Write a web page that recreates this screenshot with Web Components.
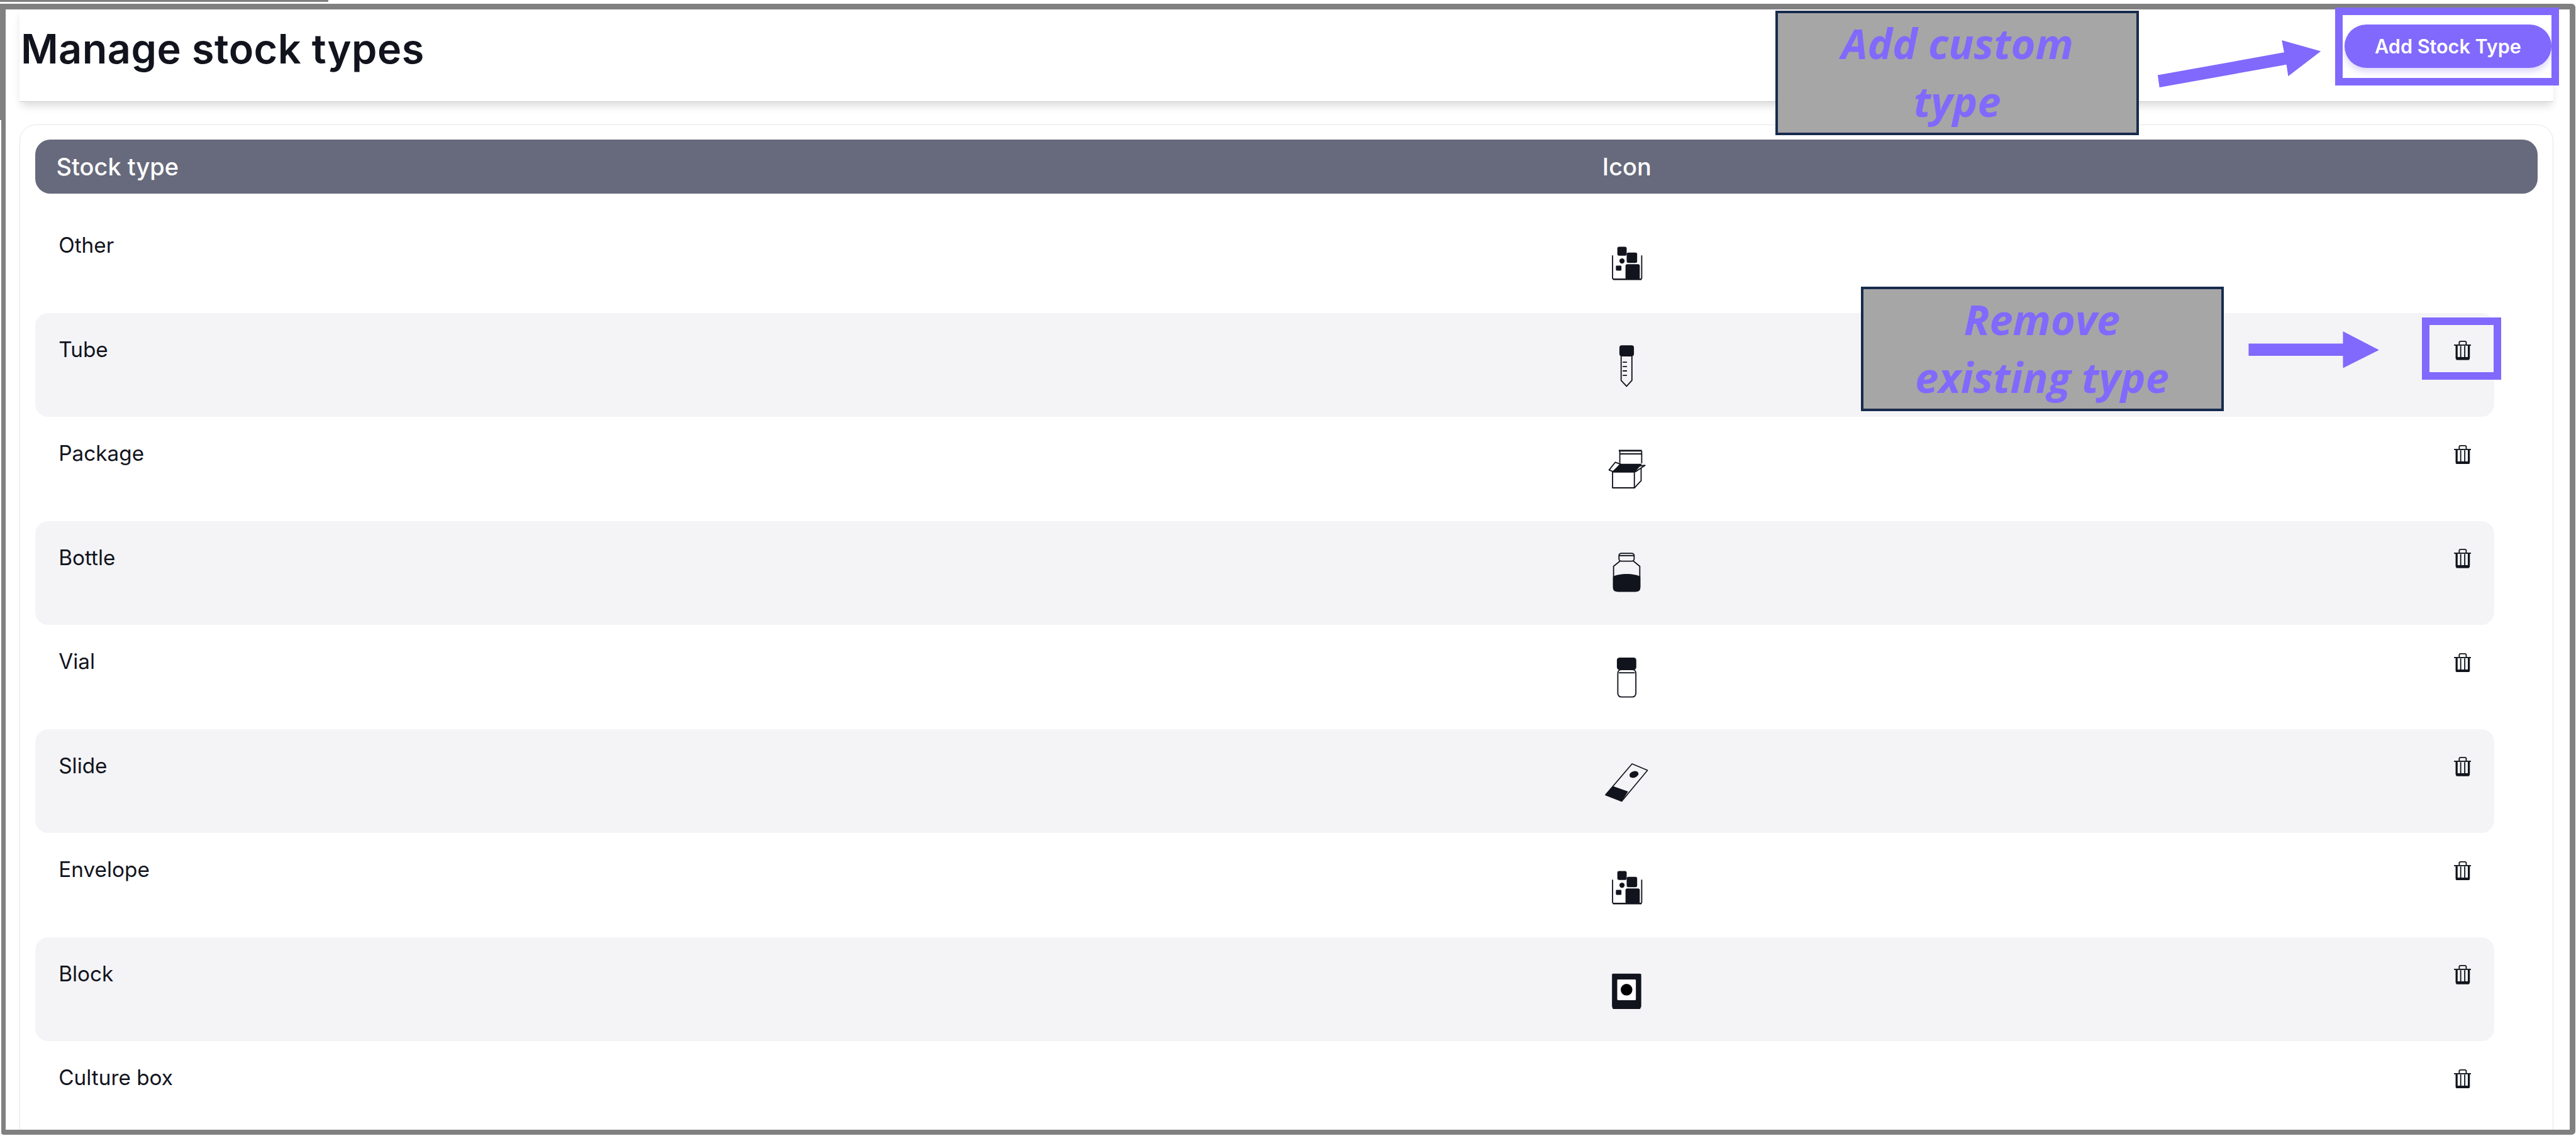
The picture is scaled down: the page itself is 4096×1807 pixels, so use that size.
<!DOCTYPE html>
<html><head><meta charset="utf-8"><title>Manage stock types</title>
<style>html,body{margin:0;padding:0;background:#fff;overflow:hidden}</style>
</head><body>
<stock-app>
  <page-header slot="header" title="Manage stock types"><pill-button>Add Stock Type</pill-button></page-header>
  <stock-table slot="table">
    <stock-row label="Other" icon="other" notrash></stock-row>
    <stock-row label="Tube" icon="tube" shaded></stock-row>
    <stock-row label="Package" icon="package"></stock-row>
    <stock-row label="Bottle" icon="bottle" shaded></stock-row>
    <stock-row label="Vial" icon="vial"></stock-row>
    <stock-row label="Slide" icon="slide" shaded></stock-row>
    <stock-row label="Envelope" icon="other"></stock-row>
    <stock-row label="Block" icon="block" shaded></stock-row>
    <stock-row label="Culture box"></stock-row>
  </stock-table>
  <callout-box slot="overlay" style="left:3048px;top:18px;width:624px">Add custom<br>type</callout-box>
  <callout-box slot="overlay" style="left:3194px;top:492px;width:623px">Remove<br>existing type</callout-box>
  <ring-mark slot="overlay" style="left:4009px;top:13px;width:384px;height:134px"></ring-mark>
  <ring-mark slot="overlay" style="left:4157px;top:545px;width:137px;height:107px"></ring-mark>
  <callout-arrow slot="overlay" points="3704,129 3707,150 3925,111 3928,131 3984,88 3917,69 3921,90"></callout-arrow>
  <callout-arrow slot="overlay" points="3860,590 4022,590 4022,569 4084,601 4022,632 4022,611 3860,611"></callout-arrow>
</stock-app>
<script>
const def=(name,html,extra)=>{
  const t=document.createElement('template');t.innerHTML=html;
  customElements.define(name,class extends HTMLElement{
    constructor(){super();this.attachShadow({mode:'open'}).appendChild(t.content.cloneNode(true));}
    connectedCallback(){extra&&extra.call(this,this.shadowRoot);}
  });
};
const INK='#12141d';
const other=`<g fill="${INK}"><path d="M16.3 29.5V68q0 2 2 2H64.3q2 0 2-2V29.5" fill="none" stroke="${INK}" stroke-width="2"/><path d="M17 69.5H66v2.2H17z"/><rect x="24.500" y="14.500" width="16" height="15.500" rx="3"/><rect x="40.500" y="24.500" width="18" height="18" rx="3"/><rect x="38.500" y="44.500" width="24.500" height="26" rx="3"/><circle cx="32.500" cy="39" r="4.500"/><rect x="22" y="47" width="9.500" height="8.500" rx="1.500"/></g>`;
const icons={
other,
tube:`<g fill="none" stroke="${INK}" stroke-width="2"><path d="M31 24V66L40.300 76 49.500 66V24"/><path d="M33.700 34.700H41M33.700 42.300H41M33.700 49.700H41M33.700 57.300H41"/></g><path fill="${INK}" d="M32 5.700H49q4 0 4 4V20q0 4.700-4 4.700H32q-4 0-4-4.700V9.700q0-4 4-4z"/>`,
package:`<g fill="none" stroke="${INK}" stroke-width="2" stroke-linejoin="round"><path d="M28.700 8V29M66.300 8V29M28 13H66"/><rect x="16.300" y="44" width="37.400" height="27.300"/><path d="M53.700 71.300 65.300 59V37"/><path d="M17 43.300 10.300 40.700 21 27.300 30.300 30.700z"/><path d="M55 44 72 32.700 60 34"/></g><path d="M27 7.500H66.500" stroke="${INK}" stroke-width="3"/><path fill="${INK}" d="M28.700 30H67L55 44H17z"/>`,
bottle:`<g fill="none" stroke="${INK}" stroke-width="2" stroke-linejoin="round"><rect x="27.300" y="5.500" width="26" height="13.500" rx="4"/><path d="M28 9.500H53M29 19 18 27.700V64M52 19 63 27.700V64"/></g><path fill="${INK}" d="M17 46C25 39.500 56 39.500 64 46V65Q64 71.700 55 71.700H26Q17 71.700 17 65z"/>`,
vial:`<rect x="25.300" y="26" width="31" height="47" rx="6" fill="none" stroke="${INK}" stroke-width="2"/><path d="M27 31.500H54.500" stroke="${INK}" stroke-width="2"/><rect x="23.700" y="5.300" width="33.300" height="21" rx="4.500" fill="${INK}"/>`,
slide:`<path d="M49.700 9.700 76.300 20.700 32 74 4.300 63z" fill="none" stroke="${INK}" stroke-width="1.800" stroke-linejoin="round"/><path fill="${INK}" d="M17 48 43 57.300 32 74 4.300 63z"/><ellipse cx="53" cy="28" rx="8" ry="5.500" transform="rotate(-20 53 28)" fill="${INK}"/>`,
block:`<path fill="${INK}" d="M17 12.700H63.500q2 0 2 2V69L63.500 73.300H17L15.300 69V14.700q0-2 1.700-2z"/><rect x="24.300" y="22.700" width="32" height="35.600" rx="1.500" fill="#fff"/><circle cx="40.300" cy="40.300" r="10" fill="#000"/>`
};
def('stock-app',`<style>
:host{display:block;zoom:.92627;width:4422px;height:1951px;position:relative;background:#fff;overflow:hidden;font-family:Inter,"Liberation Sans",sans-serif;color:${INK}}
.stray{height:3px;width:564px;background:#808080;margin-bottom:4px}
.frame{box-sizing:border-box;height:1942px;margin:0 1px 0 2px;border:solid #808080;border-width:10px 10px 9px 8px;border-radius:0 6px 6px 4px;overflow:hidden;padding:0 28px 0 24px;background:#fff}
.patch{position:absolute;left:0;top:7px;width:2px;height:199px;background:#808080}
</style>
<div class="stray"></div><div class="patch"></div>
<div class="frame"><slot name="header"></slot><slot name="table"></slot></div>
<slot name="overlay"></slot>`);
def('page-header',`<style>
:host{display:flex;box-sizing:border-box;height:158px;padding:25px 3px 0 2px;justify-content:space-between;align-items:flex-start;border-bottom:2px solid #cfcfd2;box-shadow:0 8px 14px -2px rgba(0,0,0,.14);background:#fff;position:relative}
h1{margin:0;margin-top:1px;font:600 70px/82px Inter,"Liberation Sans",sans-serif;letter-spacing:.45px;color:${INK}}
</style><h1></h1><slot></slot>`,function(r){r.querySelector('h1').textContent=this.getAttribute('title')});
def('pill-button',`<style>
:host{display:flex;align-items:center;justify-content:center;width:356px;height:75px;border-radius:38px;background:#8069fc;color:#fff;font:600 33px/40px Inter,"Liberation Sans",sans-serif;box-shadow:0 6px 12px rgba(128,105,252,.28);white-space:nowrap}
</style><slot></slot>`);
def('stock-table',`<style>
:host{display:block;margin-top:39px;box-sizing:border-box;height:1800px;border:2px solid #e6e6ee;border-radius:28px;padding:25px 26px 0}
.head{display:grid;grid-template-columns:2654px 1fr;height:93px;align-items:center;background:#676a7c;border-radius:26px;color:#fff;padding-left:36px;font:500 41px/48px Inter,"Liberation Sans",sans-serif}
.rows{display:block;margin:26px 75px 0 0}
</style><div class="head"><span>Stock type</span><span>Icon</span></div><div class="rows"><slot></slot></div>`);
def('stock-row',`<style>
:host{display:grid;grid-template-columns:2651px 80px 1fr 30px;box-sizing:border-box;height:178.7px;padding:0 39px 0 40px;border-radius:22px;align-items:start}
:host([shaded]){background:#f4f4f7}
.t{padding-top:41px;font:400 36px/44px Inter,"Liberation Sans",sans-serif;color:${INK}}
.i{padding-top:50px;height:90px}
.d{grid-column:4;padding-top:48px}
svg{display:block}
</style><div class="t"></div><div class="i"></div><div class="d"></div>`,function(r){
  r.querySelector('.t').textContent=this.getAttribute('label');
  const n=this.getAttribute('icon');
  if(n) r.querySelector('.i').innerHTML=`<svg width="80" height="90" viewBox="0 0 80 90" aria-hidden="true">${icons[n]}</svg>`;
  if(!this.hasAttribute('notrash')) r.querySelector('.d').innerHTML=`<trash-icon></trash-icon>`;
});
def('trash-icon',`<style>:host{display:block;width:30px;height:33px}svg{display:block}</style>
<svg width="30" height="33" viewBox="0 0 30 33" aria-hidden="true"><g fill="none" stroke="${INK}"><path stroke-width="2" d="M9 7V3.500Q9 1 11.500 1H18.500Q21 1 21 3.500V7"/><path stroke-width="2" d="M0 7.500H30"/><path stroke-width="3.500" d="M4.500 8V29.500Q4.500 31 6 31H24Q25.500 31 25.500 29.500V8"/><path stroke-width="2" d="M11.500 9V29M18.500 9V29"/></g><path fill="${INK}" d="M4 28H26V33H4z"/></svg>`);
def('callout-box',`<style>
:host{display:block;position:absolute;box-sizing:border-box;height:214px;border:5px solid #172b4d;background:#a6a6a6;color:#8069fc;text-align:center;padding-top:3px;font:italic 700 72px/99px "Open Sans","Liberation Sans",sans-serif;white-space:nowrap}
</style><slot></slot>`);
def('ring-mark',`<style>:host{display:block;position:absolute;box-sizing:border-box;border:14px solid #8069fc}</style>`);
def('callout-arrow',`<style>:host{display:block;position:absolute;left:0;top:0;width:0;height:0}svg{display:block;overflow:visible}</style><svg width="1" height="1" aria-hidden="true"><polygon fill="#8069fc"/></svg>`,function(r){
  r.querySelector('polygon').setAttribute('points',this.getAttribute('points'));
});
</script>
</body></html>
